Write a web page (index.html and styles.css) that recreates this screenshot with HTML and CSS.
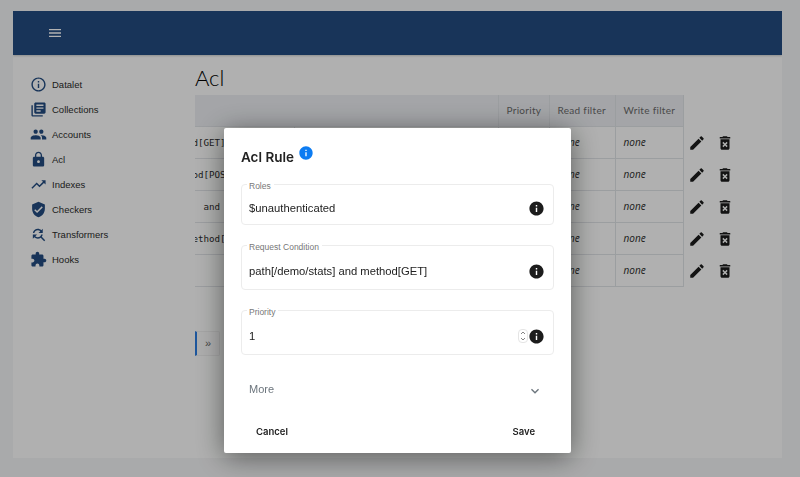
FILE: index.html
```html
<!DOCTYPE html>
<html lang="en">
<head>
    <meta charset="UTF-8">
    <meta name="viewport" content="width=device-width, initial-scale=1.0">
    <title>Acl</title>
    <link rel="stylesheet" href="styles.css">
</head>
<body>
    <svg class="icon-defs" aria-hidden="true">
        <symbol id="i-menu" viewBox="0 0 24 24"><path d="M3 18h18v-2H3v2zm0-5h18v-2H3v2zm0-7v2h18V6H3z"/></symbol>
        <symbol id="i-info-o" viewBox="0 0 24 24"><path d="M11 7h2v2h-2zm0 4h2v6h-2zm1-9C6.48 2 2 6.48 2 12s4.48 10 10 10 10-4.48 10-10S17.52 2 12 2zm0 18c-4.41 0-8-3.59-8-8s3.59-8 8-8 8 3.59 8 8-3.59 8-8 8z"/></symbol>
        <symbol id="i-books" viewBox="0 0 24 24"><path d="M4 6H2v14c0 1.1.9 2 2 2h14v-2H4V6zm16-4H8c-1.1 0-2 .9-2 2v12c0 1.1.9 2 2 2h12c1.1 0 2-.9 2-2V4c0-1.1-.9-2-2-2zm-1 9H9V9h10v2zm-4 4H9v-2h6v2zm4-8H9V5h10v2z"/></symbol>
        <symbol id="i-people" viewBox="0 0 24 24"><path d="M16 11c1.66 0 2.99-1.34 2.99-3S17.66 5 16 5c-1.66 0-3 1.34-3 3s1.34 3 3 3zm-8 0c1.66 0 2.99-1.34 2.99-3S9.66 5 8 5C6.34 5 5 6.34 5 8s1.34 3 3 3zm0 2c-2.33 0-7 1.17-7 3.5V19h14v-2.5c0-2.33-4.67-3.5-7-3.5zm8 0c-.29 0-.62.02-.97.05 1.16.84 1.97 1.97 1.97 3.45V19h6v-2.5c0-2.33-4.67-3.5-7-3.5z"/></symbol>
        <symbol id="i-lock" viewBox="0 0 24 24"><path d="M18 8h-1V6c0-2.76-2.24-5-5-5S7 3.24 7 6v2H6c-1.1 0-2 .9-2 2v10c0 1.1.9 2 2 2h12c1.1 0 2-.9 2-2V10c0-1.1-.9-2-2-2zm-6 9c-1.1 0-2-.9-2-2s.9-2 2-2 2 .9 2 2-.9 2-2 2zm3.1-9H8.9V6c0-1.71 1.39-3.1 3.1-3.1 1.71 0 3.1 1.39 3.1 3.1v2z"/></symbol>
        <symbol id="i-trend" viewBox="0 0 24 24"><path d="M16 6l2.29 2.29-4.88 4.88-4-4L2 16.59 3.41 18l6-6 4 4 6.3-6.29L22 12V6z"/></symbol>
        <symbol id="i-shield" viewBox="0 0 24 24"><path d="M12 1L3 5v6c0 5.55 3.84 10.74 9 12 5.16-1.26 9-6.45 9-12V5l-9-4zm-2 16l-4-4 1.41-1.41L10 14.17l6.59-6.59L18 9l-8 8z"/></symbol>
        <symbol id="i-replace" viewBox="0 0 24 24"><path d="M11 6c1.38 0 2.63.56 3.54 1.46L12 10h6V4l-2.05 2.05C14.68 4.78 12.93 4 11 4c-3.53 0-6.43 2.61-6.92 6H6.1c.46-2.28 2.48-4 4.9-4zm5.64 9.14c.66-.9 1.12-1.97 1.28-3.14H15.9c-.46 2.28-2.48 4-4.9 4-1.38 0-2.63-.56-3.54-1.46L10 12H4v6l2.05-2.05C7.32 17.22 9.07 18 11 18c1.55 0 2.98-.51 4.14-1.36L20 21.49 21.49 20l-4.85-4.86z"/></symbol>
        <symbol id="i-puzzle" viewBox="0 0 24 24"><path d="M20.5 11H19V7c0-1.1-.9-2-2-2h-4V3.5C13 2.12 11.88 1 10.5 1S8 2.12 8 3.5V5H4c-1.1 0-1.99.9-1.99 2v3.8H3.5c1.49 0 2.7 1.21 2.7 2.7s-1.21 2.7-2.7 2.7H2V20c0 1.1.9 2 2 2h3.8v-1.5c0-1.49 1.21-2.7 2.7-2.7 1.49 0 2.7 1.21 2.7 2.7V22H17c1.1 0 2-.9 2-2v-4h1.5c1.38 0 2.5-1.12 2.5-2.5S21.88 11 20.5 11z"/></symbol>
        <symbol id="i-edit" viewBox="0 0 24 24"><path d="M3 17.25V21h3.75L17.81 9.94l-3.75-3.75L3 17.25zM20.71 7.04c.39-.39.39-1.02 0-1.41l-2.34-2.34c-.39-.39-1.02-.39-1.41 0l-1.83 1.83 3.75 3.75 1.83-1.83z"/></symbol>
        <symbol id="i-delete" viewBox="0 0 24 24"><path d="M6 19c0 1.1.9 2 2 2h8c1.1 0 2-.9 2-2V7H6v12zm2.46-7.12l1.41-1.41L12 12.59l2.12-2.12 1.41 1.41L13.41 14l2.12 2.12-1.41 1.41L12 15.41l-2.12 2.12-1.41-1.41L10.59 14l-2.13-2.12zM15.5 4l-1-1h-5l-1 1H5v2h14V4z"/></symbol>
        <symbol id="i-info" viewBox="0 0 24 24"><path d="M12 2C6.48 2 2 6.48 2 12s4.48 10 10 10 10-4.48 10-10S17.52 2 12 2zm1 15h-2v-6h2v6zm0-8h-2V7h2v2z"/></symbol>
        <symbol id="i-more" viewBox="0 0 24 24"><path d="M16.59 8.59L12 13.17 7.41 8.59 6 10l6 6 6-6z"/></symbol>
    </svg>

    <div class="app">
        <header class="topbar">
            <svg class="topbar-menu"><use href="#i-menu"/></svg>
        </header>
        <div class="app-body">
            <nav class="sidebar">
                <a class="nav-item" href="#"><svg class="nav-icon"><use href="#i-info-o"/></svg>Datalet</a>
                <a class="nav-item" href="#"><svg class="nav-icon"><use href="#i-books"/></svg>Collections</a>
                <a class="nav-item" href="#"><svg class="nav-icon"><use href="#i-people"/></svg>Accounts</a>
                <a class="nav-item" href="#"><svg class="nav-icon"><use href="#i-lock"/></svg>Acl</a>
                <a class="nav-item" href="#"><svg class="nav-icon"><use href="#i-trend"/></svg>Indexes</a>
                <a class="nav-item" href="#"><svg class="nav-icon"><use href="#i-shield"/></svg>Checkers</a>
                <a class="nav-item" href="#"><svg class="nav-icon"><use href="#i-replace"/></svg>Transformers</a>
                <a class="nav-item" href="#"><svg class="nav-icon"><use href="#i-puzzle"/></svg>Hooks</a>
            </nav>
            <main class="content">
                <h1 class="page-title">Acl</h1>
                <div class="table-clip">
                    <table class="acl-table">
                        <colgroup>
                            <col class="col-condition">
                            <col class="col-roles">
                            <col class="col-priority">
                            <col class="col-read">
                            <col class="col-write">
                            <col class="col-action">
                            <col class="col-action">
                        </colgroup>
                        <thead>
                            <tr>
                                <th></th>
                                <th></th>
                                <th>Priority</th>
                                <th>Read filter</th>
                                <th>Write filter</th>
                                <th class="action-head"></th>
                                <th class="action-head"></th>
                            </tr>
                        </thead>
                        <tbody>
                            <tr>
                                <td class="code">method[GET] or xy</td>
                                <td class="code">$unauthenticated</td>
                                <td>1</td>
                                <td class="none">none</td>
                                <td class="none">none</td>
                                <td class="action"><svg class="action-icon"><use href="#i-edit"/></svg></td>
                                <td class="action"><svg class="action-icon"><use href="#i-delete"/></svg></td>
                            </tr>
                            <tr>
                                <td class="code">method[POST] or</td>
                                <td class="code">$unauthenticated</td>
                                <td>1</td>
                                <td class="none">none</td>
                                <td class="none">none</td>
                                <td class="action"><svg class="action-icon"><use href="#i-edit"/></svg></td>
                                <td class="action"><svg class="action-icon"><use href="#i-delete"/></svg></td>
                            </tr>
                            <tr>
                                <td class="code">and</td>
                                <td class="code">$authenticated</td>
                                <td>1</td>
                                <td class="none">none</td>
                                <td class="none">none</td>
                                <td class="action"><svg class="action-icon"><use href="#i-edit"/></svg></td>
                                <td class="action"><svg class="action-icon"><use href="#i-delete"/></svg></td>
                            </tr>
                            <tr>
                                <td class="code">method[*]</td>
                                <td class="code">$authenticated</td>
                                <td>1</td>
                                <td class="none">none</td>
                                <td class="none">none</td>
                                <td class="action"><svg class="action-icon"><use href="#i-edit"/></svg></td>
                                <td class="action"><svg class="action-icon"><use href="#i-delete"/></svg></td>
                            </tr>
                            <tr>
                                <td class="code"></td>
                                <td class="code">admin</td>
                                <td>1</td>
                                <td class="none">none</td>
                                <td class="none">none</td>
                                <td class="action"><svg class="action-icon"><use href="#i-edit"/></svg></td>
                                <td class="action"><svg class="action-icon"><use href="#i-delete"/></svg></td>
                            </tr>
                        </tbody>
                    </table>
                </div>
                <div class="pager">
                    <button class="pager-next">»</button>
                </div>
            </main>
        </div>
    </div>

    <div class="backdrop">
        <div class="modal">
            <h2 class="modal-title">Acl Rule <svg class="modal-title-info"><use href="#i-info"/></svg></h2>

            <div class="field field-short">
                <label class="field-label">Roles</label>
                <input class="field-input" type="text" value="$unauthenticated">
                <svg class="field-info"><use href="#i-info"/></svg>
            </div>

            <div class="field">
                <label class="field-label">Request Condition</label>
                <input class="field-input" type="text" value="path[/demo/stats] and method[GET]">
                <svg class="field-info"><use href="#i-info"/></svg>
            </div>

            <div class="field">
                <label class="field-label">Priority</label>
                <input class="field-input" type="text" value="1">
                <span class="spinner">
                    <svg viewBox="0 0 8 14" width="8" height="14">
                        <path d="M2 5l2-2 2 2M2 9l2 2 2-2" fill="none" stroke="#666" stroke-width=".8"/>
                    </svg>
                </span>
                <svg class="field-info"><use href="#i-info"/></svg>
            </div>

            <div class="more-row">
                <span>More</span>
                <svg class="more-icon"><use href="#i-more"/></svg>
            </div>

            <div class="modal-actions">
                <button class="modal-btn">Cancel</button>
                <button class="modal-btn">Save</button>
            </div>
        </div>
    </div>
</body>
</html>
```

FILE: styles.css
```css
* {
    box-sizing: border-box;
}
html, body {
    height: 100%;
}
body {
    margin: 0;
    padding: 11px 18px 19px 13px;
    overflow: hidden;
    background-color: #f3f4f5;
    color: #2b2b2b;
    font-family: "Liberation Sans", Arial, sans-serif;
}
.icon-defs {
    display: none;
}
svg {
    fill: currentColor;
}
.app {
    height: 100%;
    background-color: #fcfdfc;
    overflow: hidden;
}
.topbar {
    display: flex;
    align-items: center;
    height: 44px;
    padding-left: 34px;
    background-color: #234b80;
    color: #fff;
    box-shadow: 0 1px 2px rgba(0, 0, 0, 0.2);
}
.topbar-menu {
    width: 16px;
    height: 16px;
}
.app-body {
    display: flex;
}
.sidebar {
    display: flex;
    flex-direction: column;
    width: 182px;
    padding: 17px 0 0 17px;
}
.nav-item {
    display: flex;
    align-items: center;
    gap: 5px;
    height: 25px;
    color: #2b2b2b;
    font-size: 9.5px;
    text-decoration: none;
}
.nav-icon {
    width: 17px;
    height: 17px;
    color: #234b80;
}
.content {
    flex: 1;
    min-width: 0;
}
.page-title {
    margin: 10px 0 4px;
    height: 26px;
    font-family: Lato, sans-serif;
    font-size: 22px;
    line-height: 26px;
    font-weight: 300;
    color: #000;
}
.table-clip {
    overflow: hidden;
}
.acl-table {
    table-layout: fixed;
    width: 609px;
    margin-left: -65px;
    border-collapse: collapse;
    font-size: 10px;
}
.col-condition {
    width: 164px;
}
.col-roles {
    width: 204px;
}
.col-priority {
    width: 51px;
}
.col-read {
    width: 66px;
}
.col-write {
    width: 68px;
}
.col-action {
    width: 28px;
}
.acl-table th {
    height: 31px;
    padding: 0 8px;
    background-color: #ebedf1;
    border-right: 1px solid #dfe2e6;
    border-bottom: 1px solid #dfe2e6;
    color: #6a6a6a;
    font-family: Lato, sans-serif;
    font-weight: 400;
    font-size: 10px;
    letter-spacing: 0.3px;
    text-align: left;
    white-space: nowrap;
}
.acl-table th:first-child {
    border-right: none;
}
.acl-table th.action-head {
    background: none;
    border: none;
}
.acl-table td {
    height: 32px;
    padding: 0 8px;
    border-right: 1px solid #dfe2e6;
    border-bottom: 1px solid #dfe2e6;
    white-space: nowrap;
}
.acl-table td.code {
    text-align: center;
    font-family: "DejaVu Sans Mono", monospace;
    font-size: 9.2px;
}
.acl-table td.none {
    font-style: italic;
    font-family: "Open Sans", sans-serif;
}
.acl-table td.action {
    padding: 0 0 0 4.5px;
    border: none;
    color: #1c1c1c;
}
.action-icon {
    display: block;
    width: 18px;
    height: 18px;
    margin-top: 2px;
}
.pager {
    margin-top: 44px;
}
.pager-next {
    width: 25px;
    height: 25px;
    padding: 0;
    background-color: #fafafa;
    border: 1px solid #eee;
    border-left: 2px solid #2a7de1;
    border-radius: 0 2px 2px 0;
    color: #666;
    font-size: 11px;
}
.backdrop {
    position: fixed;
    top: 0;
    left: 0;
    width: 100%;
    height: 100%;
    padding: 128px 0 0 224px;
    background-color: rgba(0, 0, 0, 0.3);
}
.modal {
    display: flex;
    flex-direction: column;
    width: 347px;
    height: 325px;
    padding: 17px 17px 0;
    background-color: #fff;
    border-radius: 2px;
    box-shadow: 0 4px 28px rgba(0, 0, 0, 0.5);
}
.modal-title {
    display: flex;
    align-items: flex-start;
    gap: 4px;
    height: 39px;
    margin: 0;
    padding-top: 3px;
    font-family: Inter, sans-serif;
    font-size: 13.5px;
    line-height: 18px;
    font-weight: 600;
    color: #222;
}
.modal-title-info {
    width: 16px;
    height: 16px;
    margin-top: -3px;
    color: #0d7cf2;
}
.field {
    position: relative;
    display: flex;
    align-items: center;
    height: 45px;
    margin-bottom: 20px;
    padding: 7px 8px 0 7px;
    border: 1px solid #ececec;
    border-radius: 4px;
}
.field-short {
    height: 41px;
}
.field-label {
    position: absolute;
    top: -4px;
    left: 5px;
    padding: 0 3px 0 2px;
    background-color: #fff;
    color: #777;
    font-size: 8.5px;
    line-height: 10px;
}
.field-input {
    flex: 1;
    min-width: 0;
    padding: 0;
    border: none;
    outline: none;
    background: none;
    color: #222;
    font: 11.25px "Liberation Sans", Arial, sans-serif;
}
.field-info {
    width: 17px;
    height: 17px;
    color: #1c1c1c;
}
.spinner {
    display: flex;
    align-items: center;
    height: 14px;
    border: 1px solid #e5e5e5;
    border-radius: 4px;
}
.more-row {
    display: flex;
    align-items: center;
    justify-content: space-between;
    height: 28px;
    padding: 0 11px 0 8px;
    color: #6c757d;
    font-size: 11px;
}
.more-icon {
    width: 16px;
    height: 16px;
    margin-top: 3px;
}
.modal-actions {
    display: flex;
    justify-content: space-between;
    margin-top: 23px;
    padding: 0 19px 0 15px;
}
.modal-btn {
    padding: 0;
    border: none;
    background: none;
    color: #222;
    font: 600 9.5px Inter, sans-serif;
}
```
